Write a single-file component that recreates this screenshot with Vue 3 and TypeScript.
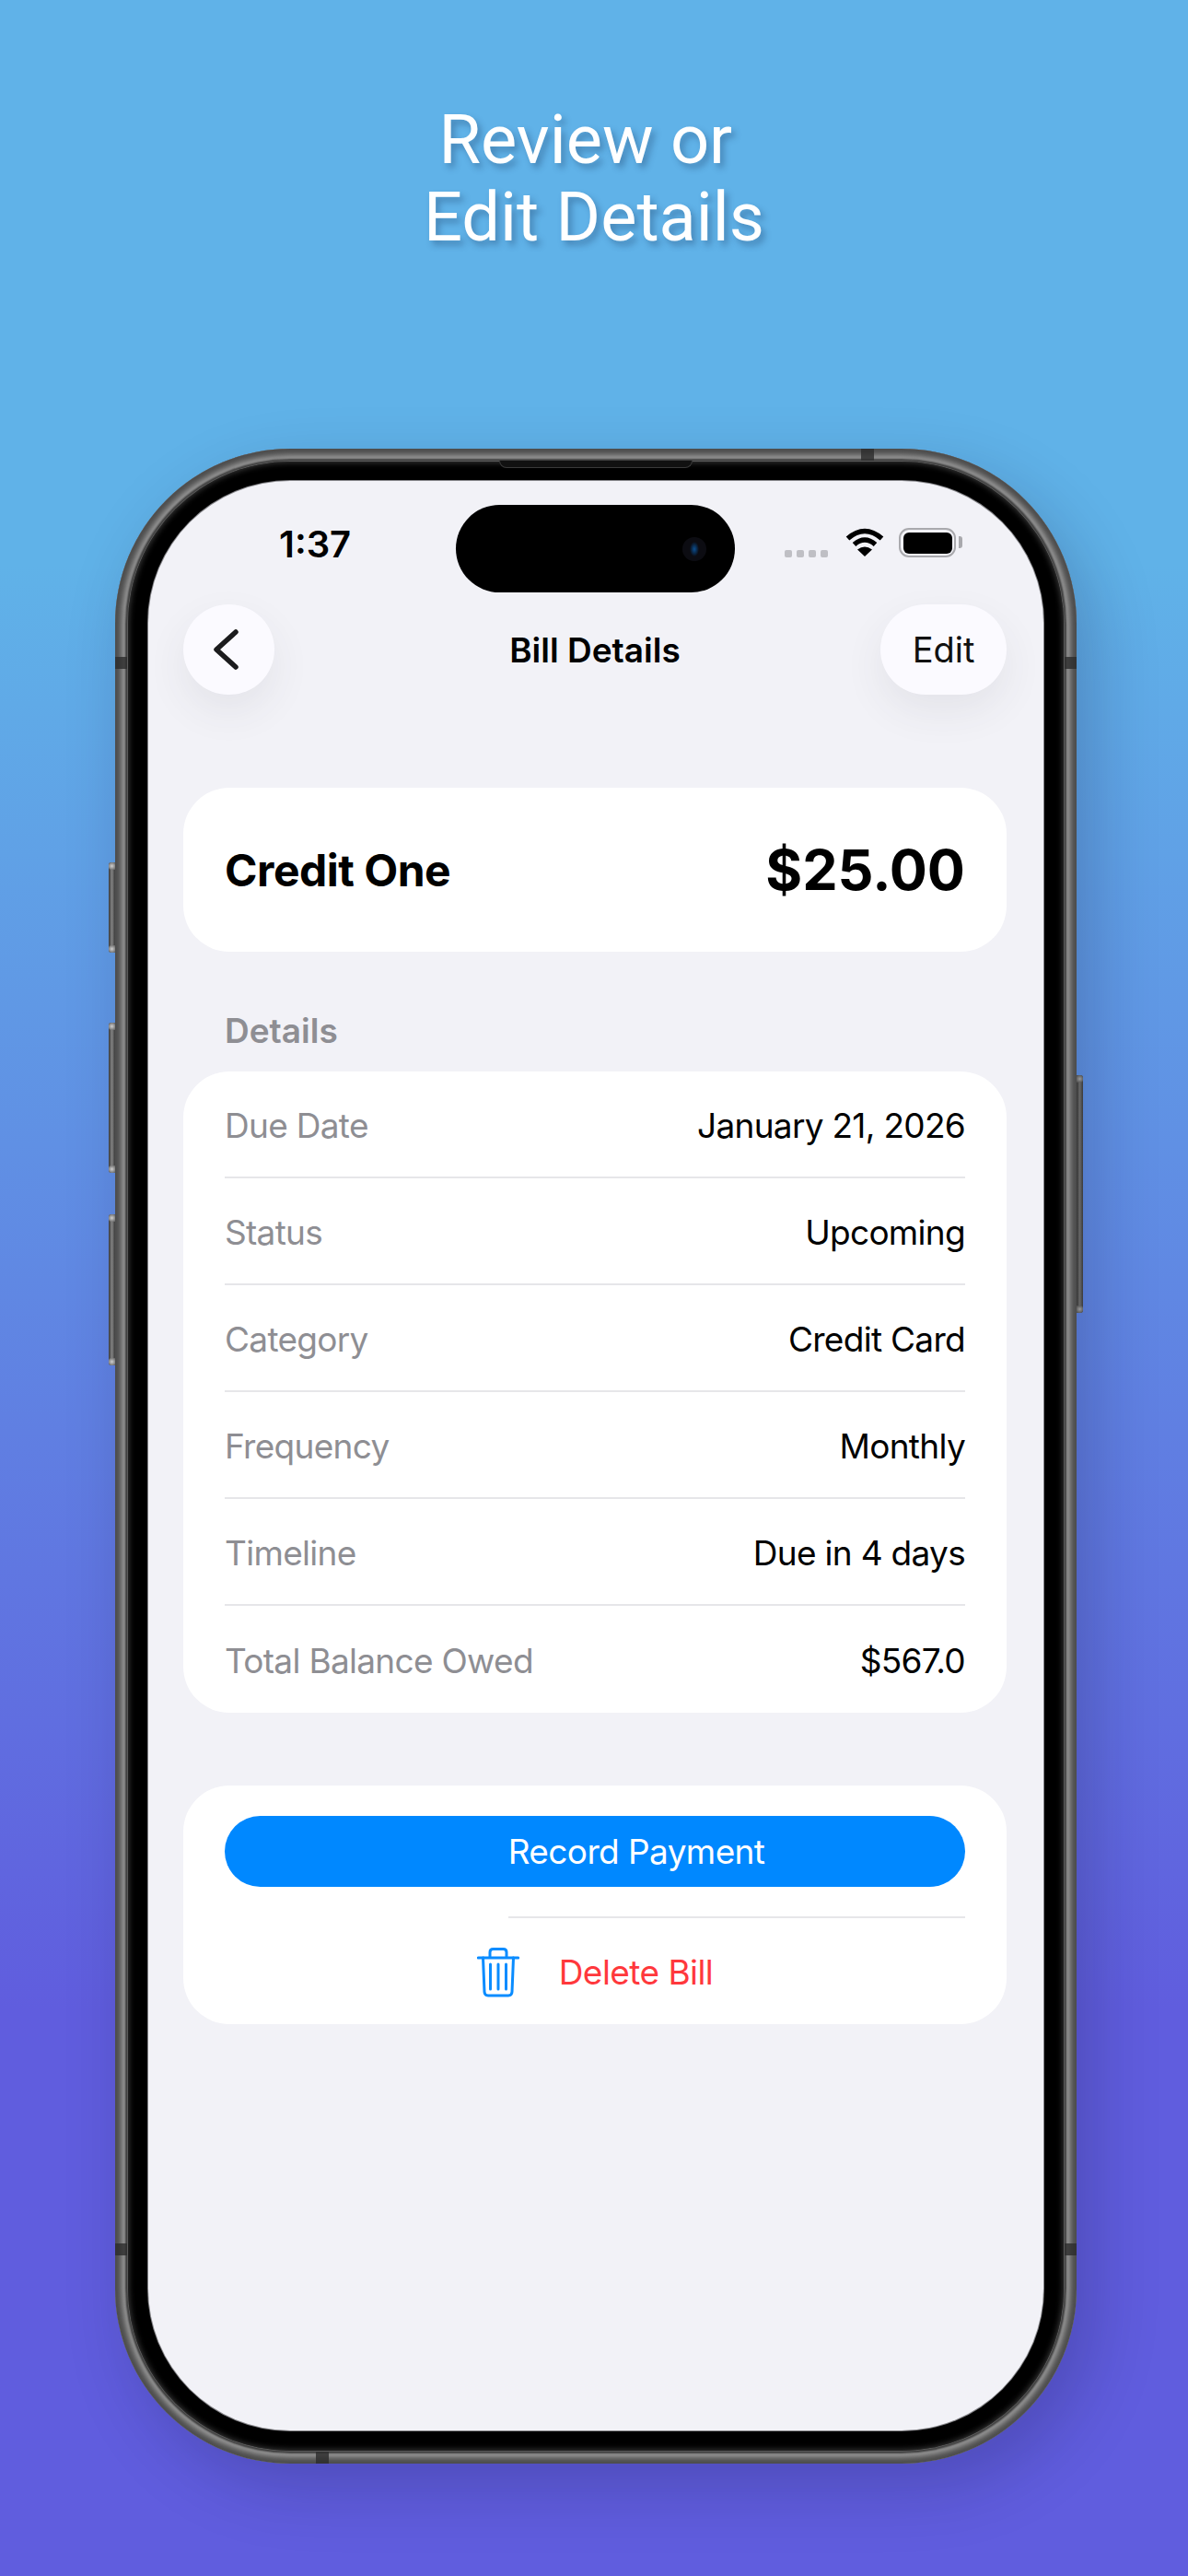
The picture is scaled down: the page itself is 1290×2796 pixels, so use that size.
<script setup lang="ts">
interface Row { label: string; value: string }
const rows: Row[] = [
  { label: 'Due Date', value: 'January 21, 2026' },
  { label: 'Status', value: 'Upcoming' },
  { label: 'Category', value: 'Credit Card' },
  { label: 'Frequency', value: 'Monthly' },
  { label: 'Timeline', value: 'Due in 4 days' },
  { label: 'Total Balance Owed', value: '$567.0' },
]
const leftKeys = ['mute', 'up', 'down']
const bands = ['l1', 'l2', 'r1', 'r2', 't1', 'b1']
</script>

<template>
  <div class="page">
    <h1 class="headline">Review or&nbsp;<br />Edit Details</h1>
    <div class="phone">
      <span v-for="k in leftKeys" :key="k" class="key" :class="k"></span>
      <span class="key power"></span>
      <span v-for="b in bands" :key="b" class="band" :class="b"></span>
      <span class="speaker"></span>
      <div class="bezel">
        <div class="screen">
          <div class="status">
            <div class="time">1:37</div>
            <div class="island"><span class="camera"></span></div>
            <div class="indicators">
              <div class="signal"><i></i><i></i><i></i><i></i></div>
              <svg class="wifi" viewBox="0 0 42 31" aria-hidden="true">
                <path d="M2.5 11.5 Q21 -4.5 39.5 11.5" fill="none" stroke="#000" stroke-width="5.5" />
                <path d="M9.5 18 Q21 8 32.5 18" fill="none" stroke="#000" stroke-width="5.5" />
                <path d="M21 31 L13 23.5 Q21 17.5 29 23.5 Z" fill="#000" />
              </svg>
              <div class="battery"><span class="cell"></span><span class="nub"></span></div>
            </div>
          </div>
          <div class="content">
            <div class="nav">
              <button class="glass back" aria-label="Back">
                <svg viewBox="0 0 30 48" width="30" height="48" aria-hidden="true">
                  <path d="M25 5 L4 24 L25 43" fill="none" stroke="#1c1c1e" stroke-width="5.5" stroke-linecap="round" stroke-linejoin="round" />
                </svg>
              </button>
              <div class="nav-title">Bill Details</div>
              <button class="glass edit">Edit</button>
            </div>

            <div class="card summary">
              <span class="payee">Credit One</span>
              <span class="amount">$25.00</span>
            </div>

            <div class="section-label">Details</div>
            <div class="card details">
              <div v-for="r in rows" :key="r.label" class="row">
                <span class="label">{{ r.label }}</span>
                <span class="value">{{ r.value }}</span>
              </div>
            </div>

            <div class="card actions">
              <button class="pay">Record Payment</button>
              <div class="divider"></div>
              <div class="delete">
                <svg class="trash" viewBox="0 0 46 54" aria-hidden="true">
                  <g fill="none" stroke="#0a8cff" stroke-width="3" stroke-linecap="round" stroke-linejoin="round">
                    <path d="M14 10 V5 Q14 1.5 17.5 1.5 H28.5 Q32 1.5 32 5 V10" />
                    <path d="M1.5 11 H44.5" stroke-width="3.2" />
                    <path d="M6.5 11 L8 48 Q8.2 52 12 52 H34 Q37.8 52 38 48 L39.5 11" />
                    <path d="M14.5 18 V45 M23 18 V45 M31.5 18 V45" />
                  </g>
                </svg>
                <span>Delete Bill</span>
              </div>
            </div>
          </div>
        </div>
      </div>
    </div>
  </div>
</template>

<style scoped>
.page {
  box-sizing: border-box;
  width: 1290px;
  height: 2796px;
  overflow: hidden;
  padding: 110px 0 0 4px;
  display: flex;
  flex-direction: column;
  align-items: center;
  background: linear-gradient(180deg, #60b2e8 0, #60b2e8 22%, #605dde 78%, #605dde 100%);
  font-family: Inter, "Liberation Sans", sans-serif;
}
.headline {
  margin: 0 4px 209px 0;
  font-family: Roboto, sans-serif;
  font-weight: 400;
  font-size: 74px;
  line-height: 84px;
  color: #fff;
  text-align: center;
  text-shadow: 4px 5px 7px rgba(20, 50, 90, 0.35);
}
.phone {
  position: relative;
  box-sizing: border-box;
  width: 1044px;
  height: 2187px;
  padding: 14px;
  border-radius: 190px;
  background: #3c3c3c;
  box-shadow:
    inset 0 0 6px 7px #4c4c4c,
    inset 0 0 2px 11px #a0a0a0,
    18px 26px 70px rgba(20, 20, 60, 0.22);
}
.bezel {
  box-sizing: border-box;
  height: 100%;
  padding: 21px 22px 22px;
  border-radius: 176px;
  background: #000;
  box-shadow: 0 0 0 1px #5a5a5a, inset 0 0 6px 1px #3a3a3a;
}
.screen {
  height: 100%;
  border-radius: 154px;
  overflow: hidden;
  background: #f2f2f7;
  box-shadow: 0 0 0 1px rgba(190, 190, 195, 0.7);
}
.key {
  position: absolute;
  width: 7px;
  background: linear-gradient(90deg, #3a3a3a, #808080 50%, #3c3c3c);
  border-radius: 3px 0 0 3px;
  left: -7px;
}
.key::before,
.key::after {
  content: "";
  position: absolute;
  left: 0;
  width: 100%;
  height: 8px;
  border-radius: 3px 0 0 3px;
  background: radial-gradient(circle at 50% 50%, #d0d0d0 0, #5a5a5a 100%);
}
.key::before { top: 0; }
.key::after { bottom: 0; }
.key.mute { top: 449px; height: 98px; }
.key.up { top: 623px; height: 163px; }
.key.down { top: 831px; height: 164px; }
.key.power {
  left: auto;
  right: -7px;
  top: 680px;
  height: 258px;
  border-radius: 0 3px 3px 0;
  background: linear-gradient(90deg, #333, #666 50%, #3a3a3a);
}
.key.power::before,
.key.power::after {
  border-radius: 0 3px 3px 0;
  background: radial-gradient(circle at 50% 50%, #999 0, #444 100%);
}
.band { position: absolute; background: rgba(44, 44, 44, 0.8); }
.band.l1 { left: 0; top: 226px; width: 13px; height: 13px; }
.band.l2 { left: 0; top: 1948px; width: 13px; height: 13px; }
.band.r1 { right: 0; top: 226px; width: 13px; height: 13px; }
.band.r2 { right: 0; top: 1948px; width: 13px; height: 13px; }
.band.t1 { top: 0; left: 810px; width: 14px; height: 13px; }
.band.b1 { bottom: 0; left: 218px; width: 14px; height: 13px; }
.speaker {
  position: absolute;
  z-index: 1;
  top: 13px;
  left: 417px;
  width: 210px;
  height: 8px;
  box-sizing: border-box;
  background: #111;
  border: 1px solid #3a3a3a;
  border-top: 0;
  border-radius: 0 0 8px 8px;
}
.status {
  display: grid;
  grid-template-columns: 334px 303px 1fr;
  height: 121px;
  color: #000;
}
.time {
  padding: 45px 0 0 142px;
  font-size: 40px;
  line-height: 48px;
  font-weight: 600;
}
.island {
  margin-top: 26px;
  height: 95px;
  border-radius: 48px;
  background: #000;
  display: flex;
  align-items: center;
  justify-content: flex-end;
  padding-right: 31px;
}
.camera {
  width: 26px;
  height: 26px;
  border-radius: 50%;
  background: radial-gradient(ellipse 5px 8px, #0d4f8f 0, #0a2a4d 55%, #0c0c12 100%);
}
.indicators {
  display: flex;
  align-items: flex-start;
  padding: 51px 0 0 54px;
}
.signal {
  display: flex;
  gap: 5px;
  margin: 24px 19px 0 0;
}
.signal i {
  width: 8px;
  height: 8px;
  border-radius: 2px;
  background: #bfbfc4;
}
.wifi {
  width: 42px;
  height: 31px;
  margin-right: 16px;
}
.battery {
  position: relative;
  box-sizing: border-box;
  width: 62px;
  height: 32px;
  border: 2.5px solid #a9a9ad;
  border-radius: 11px;
  padding: 2.5px;
}
.cell {
  display: block;
  height: 100%;
  background: #000;
  border-radius: 6px;
}
.nub {
  position: absolute;
  right: -9px;
  top: 7px;
  width: 4px;
  height: 13px;
  border-radius: 0 3px 3px 0;
  background: #a9a9ad;
}
.content {
  padding: 12px 40px 0 38px;
}
.nav {
  display: grid;
  grid-template-columns: 1fr auto 1fr;
  align-items: center;
  height: 99px;
}
.glass {
  border: 0;
  padding: 0;
  height: 98px;
  border-radius: 49px;
  background: #fbfaff;
  box-shadow: 0 18px 44px rgba(60, 60, 80, 0.08);
  color: #111;
  font-family: inherit;
}
.back {
  box-sizing: border-box;
  width: 99px;
  padding-right: 6px;
  justify-self: start;
  display: flex;
  align-items: center;
  justify-content: center;
}
.edit {
  width: 137px;
  justify-self: end;
  font-size: 38px;
}
.nav-title {
  padding-top: 2px;
  font-size: 37px;
  font-weight: 600;
  color: #000;
}
.card {
  background: #fff;
  border-radius: 50px;
}
.summary {
  margin-top: 101px;
  height: 178px;
  padding: 0 45px;
  display: flex;
  align-items: center;
  justify-content: space-between;
  color: #000;
}
.payee {
  font-size: 48px;
  font-weight: 700;
  letter-spacing: -0.5px;
}
.amount {
  font-size: 61px;
  font-weight: 700;
}
.section-label {
  margin: 63px 0 21px 45px;
  font-size: 37px;
  line-height: 46px;
  font-weight: 600;
  color: #8e8e93;
}
.details {
  padding: 0 45px;
}
.row {
  box-sizing: border-box;
  height: 116px;
  padding-top: 2px;
  display: flex;
  align-items: center;
  justify-content: space-between;
  font-size: 37px;
  letter-spacing: -0.7px;
  border-bottom: 2px solid #e6e6e9;
}
.row:last-child {
  border-bottom: 0;
}
.label { color: #8e8e93; }
.value { color: #000; }
.actions {
  margin-top: 79px;
  height: 259px;
  padding: 33px 45px 0;
  box-sizing: border-box;
}
.pay {
  display: block;
  width: 100%;
  height: 77px;
  padding: 0 0 0 90px;
  border: 0;
  border-radius: 39px;
  background: #0088ff;
  color: #fff;
  font-family: inherit;
  font-size: 37px;
  letter-spacing: -0.6px;
}
.divider {
  margin: 32px 0 0 308px;
  height: 2px;
  background: #e6e6e9;
}
.delete {
  height: 117px;
  display: flex;
  align-items: center;
  justify-content: center;
  gap: 43px;
  color: #ff383c;
  font-size: 37px;
  letter-spacing: -0.55px;
}
.trash {
  width: 46px;
  height: 54px;
}
</style>
